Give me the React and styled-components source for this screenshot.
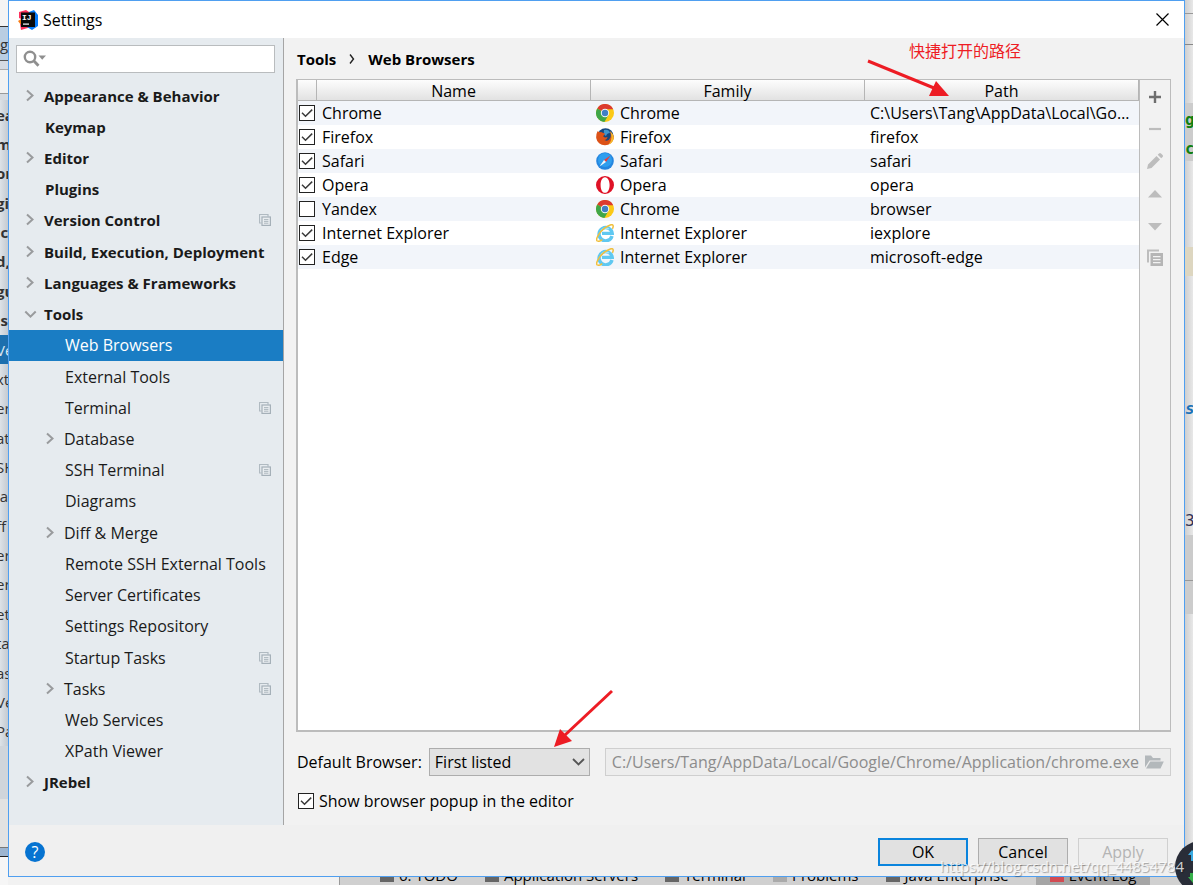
import React, { useState } from "react";
import styled, { createGlobalStyle, css } from "styled-components";

const GlobalStyle = createGlobalStyle`
  * {
    box-sizing: border-box;
  }
  body {
    margin: 0;
    background: #e8e8e8;
    color: #000;
    font: 16px/22px "Open Sans", "Noto Sans", "Noto Sans CJK SC", sans-serif;
  }
  button, input, select {
    font: inherit;
    color: inherit;
    margin: 0;
  }
`;

const TREE = [
  { name: "Appearance & Behavior", arrow: "right" },
  { name: "Keymap" },
  { name: "Editor", arrow: "right" },
  { name: "Plugins" },
  { name: "Version Control", arrow: "right", project: true },
  { name: "Build, Execution, Deployment", arrow: "right" },
  { name: "Languages & Frameworks", arrow: "right" },
  { name: "Tools", arrow: "down" },
  { name: "Web Browsers", depth: 1 },
  { name: "External Tools", depth: 1 },
  { name: "Terminal", depth: 1, project: true },
  { name: "Database", depth: 1, arrow: "right" },
  { name: "SSH Terminal", depth: 1, project: true },
  { name: "Diagrams", depth: 1 },
  { name: "Diff & Merge", depth: 1, arrow: "right" },
  { name: "Remote SSH External Tools", depth: 1 },
  { name: "Server Certificates", depth: 1 },
  { name: "Settings Repository", depth: 1 },
  { name: "Startup Tasks", depth: 1, project: true },
  { name: "Tasks", depth: 1, arrow: "right", project: true },
  { name: "Web Services", depth: 1 },
  { name: "XPath Viewer", depth: 1 },
  { name: "JRebel", arrow: "right" },
];

const BROWSERS = [
  { name: "Chrome", family: "Chrome", path: "C:\\Users\\Tang\\AppData\\Local\\Google\\Chrome", on: true },
  { name: "Firefox", family: "Firefox", path: "firefox", on: true },
  { name: "Safari", family: "Safari", path: "safari", on: true },
  { name: "Opera", family: "Opera", path: "opera", on: true },
  { name: "Yandex", family: "Chrome", path: "browser", on: false },
  { name: "Internet Explorer", family: "Internet Explorer", path: "iexplore", on: true },
  { name: "Edge", family: "Internet Explorer", path: "microsoft-edge", on: true },
];

const BEHIND = ["ea", "m", "or", "gi", "ic", "d,", "gu", "ls", "Ve", "xt", "er", "at", "SH", "ia", "ff", "er", "er", "et", "ta", "as", "Ve", "Pa"];

/* ---------- icons ---------- */

const IdeaLogo = () => (
  <svg width="20" height="20" viewBox="0 0 20 20" aria-hidden="true">
    <path d="M1 2 L8 0 L14 4 L10 12 L1 8 Z" fill="#fe315d" />
    <path d="M0 11 L5 8 L8 14 L3 15 Z" fill="#f97a12" />
    <path d="M2 14 L10 13 L13 17 L3 20 Z" fill="#fe315d" />
    <path d="M11 2 L16 0 L20 5 L20 16 L14 20 L9 17 Z" fill="#087cfa" />
    <rect x="3" y="2.5" width="14" height="14.5" fill="#0a0a0a" />
    <text x="4" y="10" fontFamily="Liberation Mono, monospace" fontWeight="bold" fontSize="8" fill="#fff">IJ</text>
    <rect x="5" y="13.5" width="6" height="1.2" fill="#fff" />
  </svg>
);

const CloseIcon = () => (
  <svg width="13" height="13" viewBox="0 0 13 13" aria-hidden="true">
    <path d="M0.5 0.5 L12.5 12.5 M12.5 0.5 L0.5 12.5" stroke="#000" strokeWidth="1.2" />
  </svg>
);

const SearchIcon = () => (
  <svg width="24" height="18" viewBox="0 0 24 18" aria-hidden="true">
    <circle cx="7" cy="7" r="5.2" fill="none" stroke="#8f8f8f" strokeWidth="2.4" />
    <path d="M10.5 10.5 L15.5 15.8" stroke="#8f8f8f" strokeWidth="2.8" />
    <path d="M15.5 5.5 H23 L19.2 9.8 Z" fill="#8f8f8f" />
  </svg>
);

const TreeArrow = ({ dir }) => (
  <svg width="16" height="16" viewBox="0 0 16 16" aria-hidden="true">
    {dir && (
      <path
        d={dir === "down" ? "M3.3 5.5 L8.5 10.7 L13.7 5.5" : "M5 2.5 L10.5 7.5 L5 12.5"}
        fill="none"
        stroke="#999b9d"
        strokeWidth="2"
      />
    )}
  </svg>
);

const ProjectIcon = () => (
  <svg width="12" height="12" viewBox="0 0 12 12" aria-hidden="true">
    <path d="M2.5 9 H0.5 V0.5 H9 V2.5" fill="none" stroke="#b0bac1" strokeWidth="1.2" />
    <rect x="3" y="3" width="8.4" height="8.4" fill="#e9edf0" stroke="#a5b0b8" strokeWidth="1.2" />
    <path d="M5 5.6 H9.4 M5 7.4 H9.4 M5 9.2 H9.4" stroke="#a5b0b8" strokeWidth="0.9" />
  </svg>
);

const CheckMark = () => (
  <svg width="16" height="16" viewBox="0 0 16 16" aria-hidden="true">
    <path d="M3 7.8 L6.5 11.3 L13.2 4.6" fill="none" stroke="#3a3a3a" strokeWidth="1.5" />
  </svg>
);

const ChevronDown = () => (
  <svg width="13" height="8" viewBox="0 0 13 8" aria-hidden="true">
    <path d="M1 1 L6.5 6.5 L12 1" fill="none" stroke="#555" strokeWidth="1.8" />
  </svg>
);

const FolderIcon = () => (
  <svg width="19" height="14" viewBox="0 0 19 14" aria-hidden="true">
    <path d="M0 0.5 H6 L8 3 H15.5 V5.5 H4.5 L0 12.5 Z" fill="#b3b8bb" />
    <path d="M5.3 6.5 H18.8 L15.5 13.5 H1 Z" fill="#b3b8bb" />
  </svg>
);

const ChromeIcon = () => (
  <svg width="18" height="18" viewBox="0 0 18 18" aria-hidden="true">
    <circle cx="9" cy="9" r="9" fill="#fbc916" />
    <path d="M9 9 L1.2 4.5 A9 9 0 0 1 17.2 5.2 L9 5.2 Z" fill="#dc3b2f" />
    <path d="M9 9 L1.2 4.5 A9 9 0 0 0 8.4 18 L12.4 11 Z" fill="#3fa648" />
    <circle cx="9" cy="9" r="4.2" fill="#f5f7f5" />
    <circle cx="9" cy="9" r="3.2" fill="#3f7fc4" />
  </svg>
);

const FirefoxIcon = () => (
  <svg width="18" height="18" viewBox="0 0 18 18" aria-hidden="true">
    <circle cx="9.5" cy="8.2" r="8" fill="#16477f" />
    <path d="M8 2 Q13 1 14 5 Q11 5 10 8 Q7 7 8 2 Z" fill="#3f94cc" />
    <path
      d="M1.5 3.2 Q3 3.5 3.8 4.2 Q5.8 3.8 7 5 Q8.5 5.2 9 6 Q7.6 7.4 7.2 8.4 Q9 10 11.6 9 Q10.8 12 8.4 12 Q12.6 14 14.4 9.6 Q15.3 6.8 14 3.5 Q18.2 6.5 17.8 10.2 A8.9 8.5 0 0 1 0.2 10 Q0 6 1.5 3.2 Z"
      fill="#dc5218"
    />
    <path d="M14 3 Q18.6 7 17.6 11 Q16.4 15 12.6 16.6 Q15.8 12.6 15.4 8.6 Q15.2 5.4 14 3 Z" fill="#f7b92c" />
  </svg>
);

const SafariIcon = () => (
  <svg width="18" height="18" viewBox="0 0 18 18" aria-hidden="true">
    <circle cx="9" cy="9" r="8.8" fill="#2485df" />
    <circle cx="9" cy="8" r="7" fill="#2f9eee" />
    <path d="M14.5 3.5 L10 10 L8 8 Z" fill="#ec3b3b" />
    <path d="M3.5 14.5 L10 10 L8 8 Z" fill="#f4f7fa" />
  </svg>
);

const OperaIcon = () => (
  <svg width="18" height="18" viewBox="0 0 18 18" aria-hidden="true">
    <path
      fillRule="evenodd"
      fill="#df1226"
      d="M9 0 A9 9 0 0 1 9 18 A9 9 0 0 1 9 0 Z M9 1.2 C6 1.2 4.6 5 4.6 9 C4.6 13 6 16.8 9 16.8 C12 16.8 13.6 13 13.6 9 C13.6 5 12 1.2 9 1.2 Z"
    />
  </svg>
);

const ExplorerIcon = () => (
  <svg width="18" height="18" viewBox="0 0 18 18" aria-hidden="true">
    <path
      d="M16 12 A6.6 6.6 0 1 1 16.2 9.4 H6"
      fill="none"
      stroke="#5fc8f1"
      strokeWidth="3.4"
    />
    <path d="M4.6 8 A5.6 5.6 0 0 1 13 5" fill="none" stroke="#a9e8fb" strokeWidth="1.2" />
    <path
      d="M1.5 17.2 C-1.5 15.5 4 7.5 8.5 4.2 C12.5 1.2 17 -0.8 17.2 2 C17.3 3 16.8 4 16.4 4.8"
      fill="none"
      stroke="#f0bf3c"
      strokeWidth="1.5"
    />
    <path d="M1.5 17.2 C3 17.6 5 16.6 6.2 15.6" fill="none" stroke="#f0bf3c" strokeWidth="1.5" />
  </svg>
);

const FAMILY_ICONS = {
  Chrome: ChromeIcon,
  Firefox: FirefoxIcon,
  Safari: SafariIcon,
  Opera: OperaIcon,
  "Internet Explorer": ExplorerIcon,
};

const TOOLS = [
  { label: "Add", drawing: <path d="M9 3 V15 M3 9 H15" stroke="#6e6e6e" strokeWidth="2.4" /> },
  { label: "Remove", off: true, drawing: <path d="M3 9 H15" stroke="#bdbdbd" strokeWidth="2.2" /> },
  {
    label: "Edit",
    off: true,
    drawing: <path d="M1 17 L2 12.5 L10.5 4 L14 7.5 L5.5 16 Z M11.7 2.8 L13 1.4 Q14 0.5 15 1.4 L16.6 3 Q17.5 4 16.6 5 L15.2 6.3 Z" fill="#bdbdbd" />,
  },
  { label: "Move up", off: true, drawing: <path d="M2 13.5 L9 6 L16 13.5 Z" fill="#bdbdbd" /> },
  { label: "Move down", off: true, drawing: <path d="M2 7 L9 14.5 L16 7 Z" fill="#bdbdbd" /> },
  {
    label: "Copy",
    off: true,
    drawing: (
      <>
        <path d="M2 14.5 V2.5 H13" fill="none" stroke="#bdbdbd" strokeWidth="2" />
        <path fillRule="evenodd" fill="#b5b5b5" d="M4.5 5 H17 V18 H4.5 Z M7 8 V9.2 H14.5 V8 Z M7 11 V12.2 H14.5 V11 Z M7 14 V15.2 H14.5 V14 Z" />
      </>
    ),
  },
];

/* ---------- desktop around the dialog ---------- */

const Desktop = styled.div`
  display: grid;
  grid-template-columns: 8px minmax(0, 1fr) 8px;
  grid-template-rows: minmax(0, 1fr) 8px;
  min-height: 100vh;
  position: relative;
  overflow: hidden;
`;

const LeftEdge = styled.div`
  grid-row: 1 / 3;
  display: flex;
  flex-direction: column;
  overflow: hidden;
  background: #f0f0f0;
  font-size: 15px;
  color: #333;
`;

const EdgeBlock = styled.div`
  flex: ${(p) => (p.$grow ? "1 1 0" : "none")};
  height: ${(p) => p.$height || 0}px;
  background: ${(p) => p.$color};
  border-bottom: ${(p) => (p.$line ? `1px solid ${p.$line}` : "none")};
  display: flex;
  align-items: center;
  min-height: 0;
  white-space: nowrap;
`;

const BehindTree = styled.div`
  flex: 1;
  display: flex;
  flex-direction: column;
  background: linear-gradient(90deg, #dde2e7, #c4cad1);
  text-indent: -4px;
`;

const BehindRow = styled.div`
  flex: 1;
  display: flex;
  align-items: center;
  font-weight: ${(p) => (p.$bold ? "bold" : "normal")};
  ${(p) =>
    p.$selected &&
    css`
      background: #1c6fae;
      color: #dbe8f2;
    `}
`;

const RightEdge = styled(LeftEdge)`
  grid-column: 3;
  grid-row: 1 / 3;
  background: linear-gradient(90deg, #cfcfcf, #e8e8e8);
`;

const CodeBit = styled.span`
  font-family: "DejaVu Sans Mono", monospace;
  font-size: 16px;
  font-weight: ${(p) => (p.$plain ? "normal" : "bold")};
  font-style: ${(p) => (p.$italic ? "italic" : "normal")};
  color: ${(p) => p.$color};
`;

const StatusBar = styled.div`
  grid-column: 2;
  grid-row: 2;
  display: flex;
  align-items: flex-end;
  gap: 27px;
  height: 8px;
  padding-left: 372px;
  overflow: hidden;
  font-size: 15px;
  line-height: 20px;
  background: linear-gradient(90deg, #f2f2f2 331px, #999 331px, #999 332px, #d0d0d0 332px);
`;

const StatusItem = styled.span`
  display: flex;
  align-items: center;
  gap: 5px;
  white-space: nowrap;
  ${(p) =>
    p.$active &&
    css`
      background: #a5a5a5;
      padding: 0 14px;
    `}
`;

const Badge = styled.span`
  width: 14px;
  height: 13px;
  background: ${(p) => p.$color || "#666"};
`;

/* ---------- dialog ---------- */

const Dialog = styled.main`
  grid-column: 2;
  grid-row: 1;
  display: flex;
  flex-direction: column;
  border: 1px solid #4f9ff0;
  background: #f2f2f2;
  position: relative;
`;

const TitleBar = styled.header`
  display: flex;
  align-items: center;
  gap: 5px;
  height: 37px;
  padding: 0 15px 0 9px;
  background: #fff;
`;

const Title = styled.h1`
  flex: 1;
  margin: 0;
  font-size: 16px;
  font-weight: normal;
`;

const PlainButton = styled.button`
  display: flex;
  align-items: center;
  justify-content: center;
  padding: 0;
  border: 0;
  background: none;
`;

const Body = styled.div`
  flex: 1;
  display: flex;
`;

const Sidebar = styled.nav`
  display: flex;
  flex-direction: column;
  flex: none;
  width: 275px;
  padding: 7px 0 27px;
  background: #e6ebef;
  border-right: 1px solid #a5a5a5;
`;

const SearchBox = styled.label`
  display: flex;
  align-items: center;
  gap: 4px;
  height: 28px;
  margin: 0 8px 7px 7px;
  padding: 0 6px;
  border: 1px solid #b9bcbe;
  background: #fff;

  input {
    flex: 1;
    min-width: 0;
    border: 0;
    outline: 0;
    background: none;
  }
`;

const Tree = styled.ul`
  flex: 1;
  display: flex;
  flex-direction: column;
  margin: 0;
  padding: 0;
  list-style: none;
`;

const TreeItem = styled.li`
  flex: 1 1 0;
  display: flex;
`;

const TreeRow = styled.button`
  flex: 1;
  display: flex;
  align-items: center;
  gap: ${(p) => (p.$leaf ? 7 : 6)}px;
  padding: 0 12px 0 ${(p) => 13 + p.$depth * 20}px;
  border: 0;
  background: ${(p) => (p.$selected ? "#1a7dc4" : "transparent")};
  color: ${(p) => (p.$selected ? "#fff" : "#1a1a1a")};
  font-size: ${(p) => (p.$depth ? 16 : 15)}px;
  font-weight: ${(p) => (p.$depth ? "normal" : "bold")};
  text-align: left;
  white-space: nowrap;
`;

const TreeLabel = styled.span`
  flex: 1;
`;

const Content = styled.section`
  flex: 1;
  min-width: 0;
  display: flex;
  flex-direction: column;
  padding: 0 13px 13px 12px;
`;

const Crumbs = styled.h2`
  display: flex;
  align-items: center;
  gap: 13px;
  height: 41px;
  margin: 0;
  padding-left: 1px;
  font-size: 15px;
  line-height: 22px;
`;

const TablePanel = styled.div`
  flex: 1;
  display: flex;
  border: 1px solid #bcbcbc;
  border-left-width: 2px;
  border-bottom-width: 2px;
`;

const TableArea = styled.div`
  flex: 1;
  min-width: 0;
  background: #fff;
`;

const Table = styled.table`
  width: 100%;
  table-layout: fixed;
  border-collapse: separate;
  border-spacing: 0;

  th {
    height: 21px;
    padding: 2px 0 0;
    border-right: 1px solid #b5b5b5;
    border-bottom: 1px solid #b5b5b5;
    background: linear-gradient(#fdfdfd, #e2e2e2);
    font-weight: normal;
    line-height: 18px;
  }
  td {
    height: 24px;
    padding: 0 5px;
    overflow: hidden;
    text-overflow: ellipsis;
    white-space: nowrap;
  }
  th:first-child,
  td:first-child {
    width: 19px;
    padding: 0 1px;
  }
  tbody tr:nth-child(odd) {
    background: #f2f5fa;
  }
`;

const Family = styled.span`
  display: flex;
  align-items: center;
  gap: 6px;
`;

const CheckFrame = styled.span`
  display: grid;
  width: 16px;
  height: 16px;
  flex: none;

  > * {
    grid-area: 1 / 1;
  }
  svg {
    pointer-events: none;
    z-index: 1;
  }
  input {
    appearance: none;
    width: 16px;
    height: 16px;
    border: 1px solid #222;
    background: #fff;
  }
`;

const ToolStrip = styled.div`
  display: flex;
  flex-direction: column;
  width: 31px;
  padding-top: 1px;
  border-left: 1px solid #bcbcbc;
`;

const ToolButton = styled(PlainButton)`
  height: 32px;
`;

const FormRow = styled.div`
  display: flex;
  align-items: center;
  height: 28px;
  margin-top: 16px;
  padding-left: 1px;
  position: relative;
`;

const SelectFrame = styled.div`
  display: grid;
  align-items: center;
  width: 161px;
  margin: 0 15px 0 7px;

  > * {
    grid-area: 1 / 1;
  }
  svg {
    justify-self: end;
    margin-right: 5px;
    pointer-events: none;
  }
  select {
    appearance: none;
    width: 100%;
    height: 28px;
    padding: 0 5px;
    border: 1px solid #adadad;
    border-radius: 0;
    background: #e2e2e2;
  }
`;

const PathField = styled.div`
  flex: 1;
  display: flex;
  align-items: center;
  height: 28px;
  padding: 0 6px;
  border: 1px solid #cfcfcf;
  background: #ededed;

  input {
    flex: 1;
    min-width: 0;
    padding: 0;
    border: 0;
    background: none;
    color: #8c8c8c;
  }
`;

const CheckLabel = styled.label`
  display: flex;
  align-items: center;
  gap: 5px;
  margin-top: 14px;
  padding-left: 2px;
`;

const Footer = styled.footer`
  display: flex;
  align-items: center;
  gap: 10px;
  height: 51px;
  padding: 2px 16px 0;
  background: #f0f0f0;
`;

const HelpButton = styled(PlainButton)`
  width: 20px;
  height: 20px;
  margin-right: auto;
  border-radius: 50%;
  background: #0673d1;
  color: #fff;
`;

const DialogButton = styled.button`
  width: 90px;
  height: 28px;
  padding: 0;
  border: ${(p) => (p.$primary ? "2px solid #0a84dd" : "1px solid #adadad")};
  background: #e1e1e1;

  &:disabled {
    border-color: #d0d0d0;
    background: #efefef;
    color: #b4b4b4;
  }
`;

/* ---------- notes drawn over the dialog ---------- */

const PathNote = styled.div`
  position: absolute;
  top: 38px;
  right: 163px;
  color: #ee1c24;
  font-family: "Noto Sans CJK SC", sans-serif;
`;

const PathArrow = styled.svg`
  position: absolute;
  top: 57px;
  right: 234px;
`;

const SelectArrow = styled.svg`
  position: absolute;
  left: 256px;
  bottom: 27px;
`;

const Watermark = styled.div`
  position: absolute;
  right: 9px;
  bottom: 8px;
  color: rgba(255, 255, 255, 0.8);
  font-size: 15px;
  text-shadow: 1px 1px 1px rgba(0, 0, 0, 0.35);
  pointer-events: none;
`;

const SpeedBall = styled.svg`
  position: absolute;
  right: 0;
  bottom: 0;
`;

const Checkbox = ({ checked, onChange, label }) => (
  <CheckFrame>
    <input type="checkbox" checked={checked} onChange={onChange} aria-label={label} />
    {checked && <CheckMark />}
  </CheckFrame>
);

const BrowserTable = () => {
  const [rows, setRows] = useState(BROWSERS);

  const toggle = (index) => {
    setRows(rows.map((row, i) => (i === index ? { ...row, on: !row.on } : row)));
  };

  return (
    <TablePanel>
      <TableArea>
        <Table>
          <thead>
            <tr>
              <th aria-label="Active" />
              <th>Name</th>
              <th>Family</th>
              <th>Path</th>
            </tr>
          </thead>
          <tbody>
            {rows.map((row, i) => {
              const Icon = FAMILY_ICONS[row.family];
              return (
                <tr key={row.name}>
                  <td>
                    <Checkbox checked={row.on} onChange={() => toggle(i)} label={row.name} />
                  </td>
                  <td>{row.name}</td>
                  <td>
                    <Family>
                      <Icon />
                      {row.family}
                    </Family>
                  </td>
                  <td>{row.path}</td>
                </tr>
              );
            })}
          </tbody>
        </Table>
      </TableArea>
      <ToolStrip>
        {TOOLS.map((tool) => (
          <ToolButton key={tool.label} aria-label={tool.label} disabled={tool.off}>
            <svg width="18" height="18" viewBox="0 0 18 18" aria-hidden="true">
              {tool.drawing}
            </svg>
          </ToolButton>
        ))}
      </ToolStrip>
    </TablePanel>
  );
};

const App = () => {
  const [selected, setSelected] = useState("Web Browsers");
  const [popup, setPopup] = useState(true);

  return (
    <Desktop>
      <GlobalStyle />
      <LeftEdge aria-hidden="true">
        <EdgeBlock $height={27} $color="#f4f4f4" $line="#333" />
        <EdgeBlock $height={34} $color="#b9cde2" $line="#555">g</EdgeBlock>
        <EdgeBlock $height={9} $color="#d5dbe3" $line="#aaa" />
        <EdgeBlock $height={24} $color="#f2f2f2" $line="#999" />
        <EdgeBlock $height={6} $color="#d5dae0" />
        <BehindTree>
          {BEHIND.map((text, i) => (
            <BehindRow key={i} $bold={i < 8} $selected={i === 8}>
              {text}
            </BehindRow>
          ))}
        </BehindTree>
        <EdgeBlock $height={53} $color="#d0d5db" />
        <EdgeBlock $height={49} $color="#e2e2e2" $line="#777" />
        <EdgeBlock $height={9} $color="#9db5d0" $line="#222" />
        <EdgeBlock $height={28} $color="#f6f6f6" />
      </LeftEdge>

      <Dialog>
        <TitleBar>
          <IdeaLogo />
          <Title>Settings</Title>
          <PlainButton aria-label="Close">
            <CloseIcon />
          </PlainButton>
        </TitleBar>
        <Body>
          <Sidebar>
            <SearchBox>
              <SearchIcon />
              <input type="text" aria-label="Search settings" />
            </SearchBox>
            <Tree>
              {TREE.map((item) => (
                <TreeItem key={item.name}>
                  <TreeRow
                    $depth={item.depth || 0}
                    $leaf={!item.arrow}
                    $selected={item.name === selected}
                    onClick={() => setSelected(item.name)}
                  >
                    <TreeArrow dir={item.arrow} />
                    <TreeLabel>{item.name}</TreeLabel>
                    {item.project && <ProjectIcon />}
                  </TreeRow>
                </TreeItem>
              ))}
            </Tree>
          </Sidebar>
          <Content>
            <Crumbs>
              <span>Tools</span>
              <svg width="6" height="10" viewBox="0 0 6 10" aria-hidden="true">
                <path d="M1 0.5 L4.5 5 L1 9.5" fill="none" stroke="#222" strokeWidth="1.4" />
              </svg>
              <span>Web Browsers</span>
            </Crumbs>
            <BrowserTable />
            <FormRow>
              <label htmlFor="default-browser">Default Browser:</label>
              <SelectFrame>
                <select id="default-browser">
                  <option>First listed</option>
                </select>
                <ChevronDown />
              </SelectFrame>
              <PathField>
                <input
                  type="text"
                  aria-label="Browser path"
                  disabled
                  defaultValue="C:/Users/Tang/AppData/Local/Google/Chrome/Application/chrome.exe"
                />
                <PlainButton aria-label="Browse" disabled>
                  <FolderIcon />
                </PlainButton>
              </PathField>
              <SelectArrow width="62" height="60" viewBox="0 0 62 60" aria-hidden="true">
                <path d="M60 2 L13 46" stroke="#ed1c24" strokeWidth="3" />
                <path d="M2 58 L8 40 L20 52 Z" fill="#ed1c24" />
              </SelectArrow>
            </FormRow>
            <CheckLabel>
              <Checkbox checked={popup} onChange={() => setPopup(!popup)} />
              Show browser popup in the editor
            </CheckLabel>
          </Content>
        </Body>
        <Footer>
          <HelpButton aria-label="Help">?</HelpButton>
          <DialogButton $primary>OK</DialogButton>
          <DialogButton>Cancel</DialogButton>
          <DialogButton disabled>Apply</DialogButton>
        </Footer>
        <PathNote>快捷打开的路径</PathNote>
        <PathArrow width="84" height="42" viewBox="0 0 84 42" aria-hidden="true">
          <path d="M2 3 L68 30" stroke="#ed1c24" strokeWidth="3" />
          <path d="M83 38 L70 23 L63 38 Z" fill="#ed1c24" />
        </PathArrow>
      </Dialog>

      <RightEdge aria-hidden="true">
        <EdgeBlock $height={14} $line="#999" />
        <EdgeBlock $height={31} $line="#888" />
        <EdgeBlock $height={58} />
        <EdgeBlock $height={34} $color="#cccccc">
          <CodeBit $color="#118011">g</CodeBit>
        </EdgeBlock>
        <EdgeBlock $height={24} $color="#cccccc">
          <CodeBit $color="#118011">c</CodeBit>
        </EdgeBlock>
        <EdgeBlock $height={86} />
        <EdgeBlock $height={29} $color="#ddd6c0" />
        <EdgeBlock $height={118} />
        <EdgeBlock $height={30}>
          <CodeBit $color="#1a72b8" $italic>s</CodeBit>
        </EdgeBlock>
        <EdgeBlock $height={83} />
        <EdgeBlock $height={28}>
          <CodeBit $color="#333355" $plain>3</CodeBit>
        </EdgeBlock>
        <EdgeBlock $height={46} $color="#cbcbcb" $line="#999" />
        <EdgeBlock $height={33} $color="#cccccc" />
        <EdgeBlock $grow />
      </RightEdge>

      <StatusBar aria-hidden="true">
        <StatusItem><Badge />6: TODO</StatusItem>
        <StatusItem><Badge />Application Servers</StatusItem>
        <StatusItem><Badge />Terminal</StatusItem>
        <StatusItem><Badge $color="#aaa" />Problems</StatusItem>
        <StatusItem><Badge />Java Enterprise</StatusItem>
        <StatusItem $active><Badge $color="#d24b52" />Event Log</StatusItem>
      </StatusBar>

      <SpeedBall width="18" height="46" viewBox="0 0 18 46" aria-hidden="true">
        <circle cx="26" cy="28" r="26" fill="#292d38" />
        <path d="M13 16 L17 11 L18 12 V22 H16 V16 Z" fill="#39a9e0" />
        <path d="M13 38 L18 44 V34 H15 V38 Z" fill="#35b04a" />
      </SpeedBall>
      <Watermark>https://blog.csdn.net/qq_44854784</Watermark>
    </Desktop>
  );
};

export default App;
